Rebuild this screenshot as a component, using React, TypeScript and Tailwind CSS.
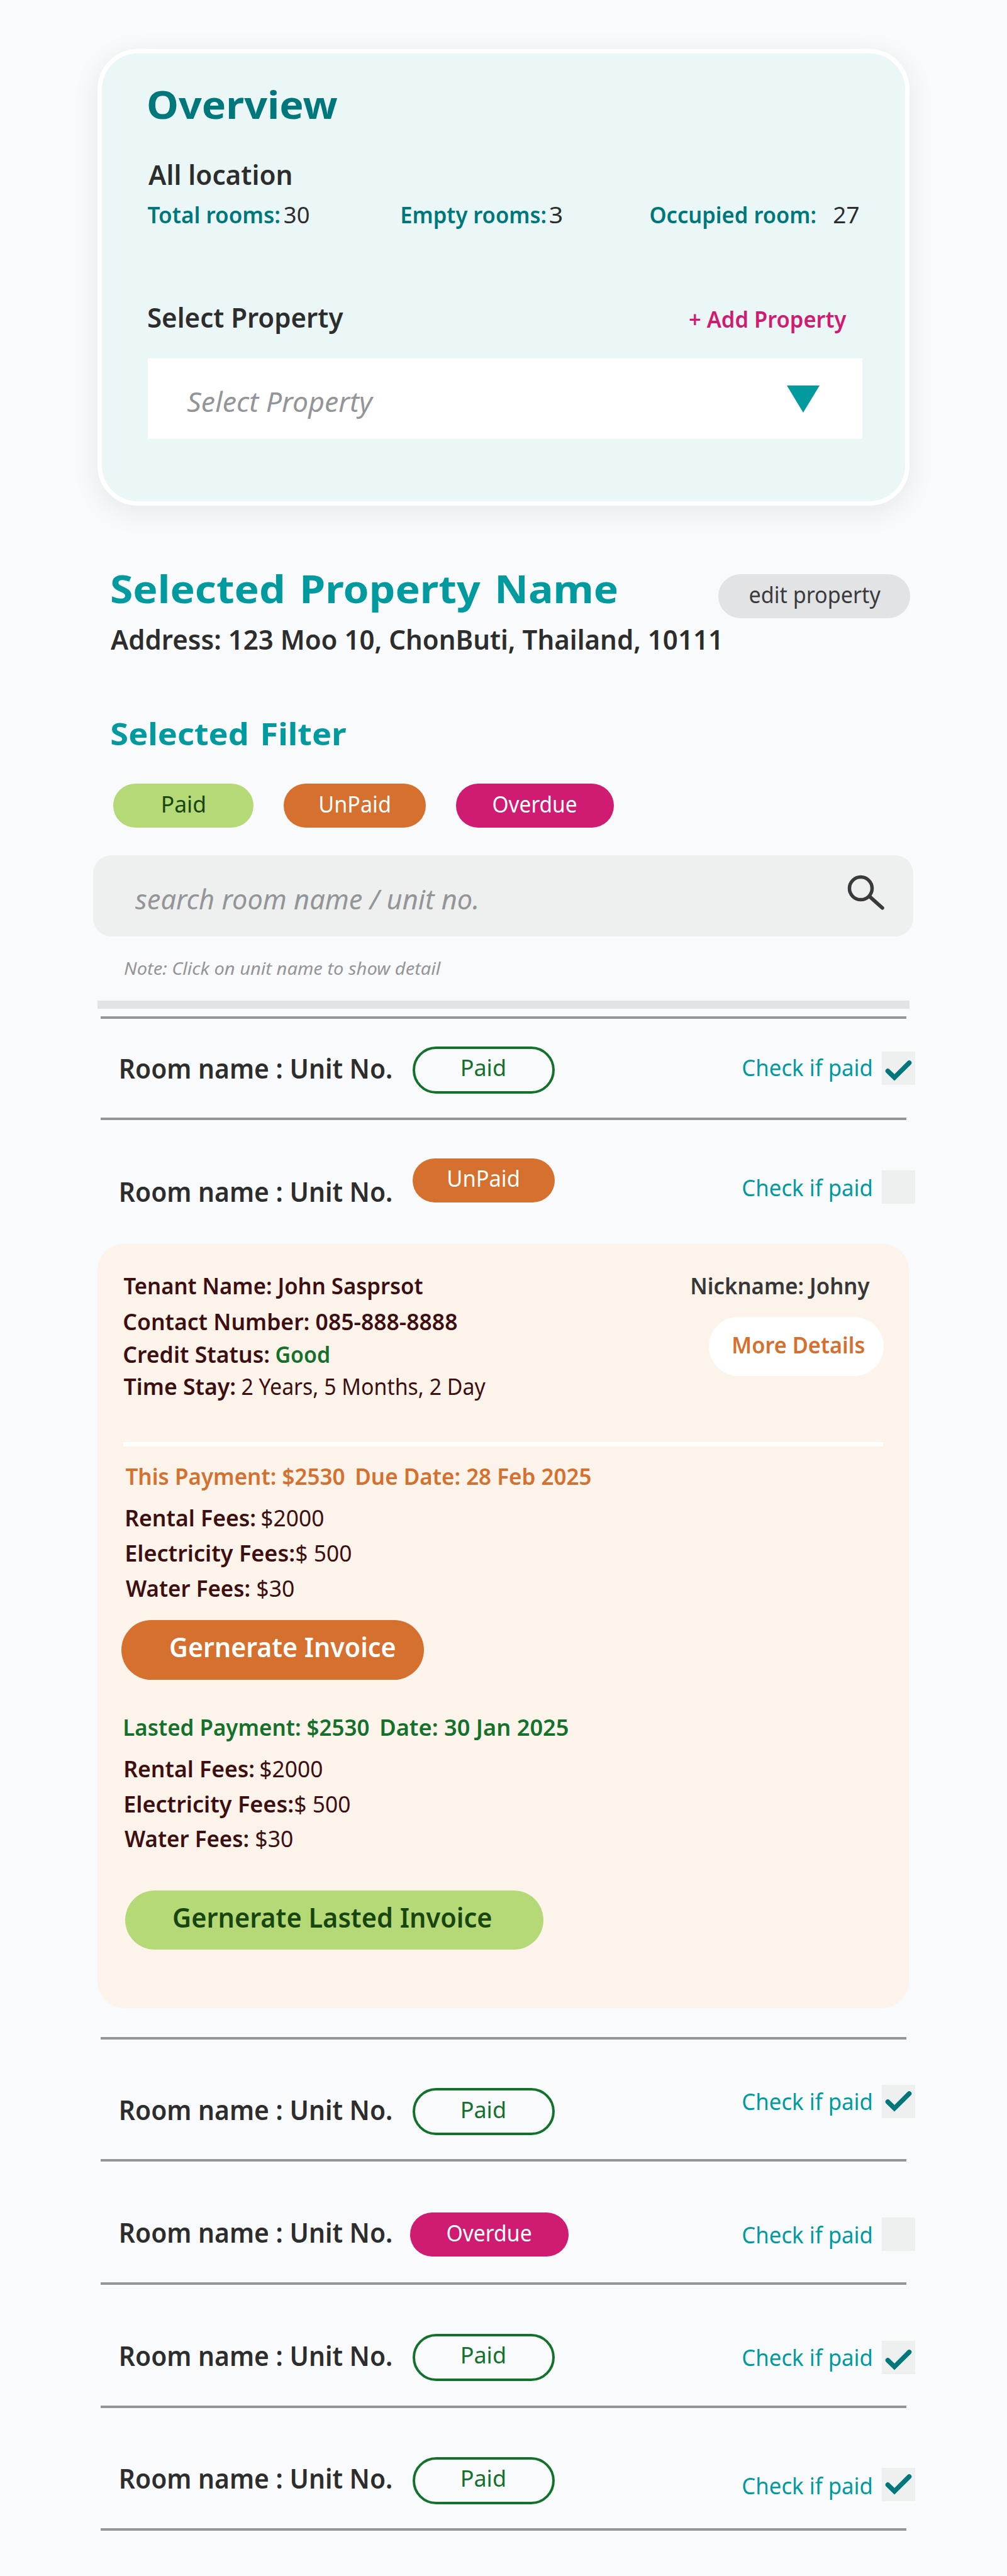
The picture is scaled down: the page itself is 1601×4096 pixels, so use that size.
import { useLayoutEffect, useRef } from "react";
import type { ReactNode } from "react";

/** One-line label whose ink spans exactly the width given by its own class. */
function Label({ children, className }: { children: string; className: string }) {
  const box = useRef<HTMLSpanElement>(null);
  const ink = useRef<HTMLSpanElement>(null);

  useLayoutEffect(() => {
    if (!box.current || !ink.current) return;
    const ctx = document.createElement("canvas").getContext("2d");
    if (!ctx) return;
    const cs = getComputedStyle(ink.current);
    // Measured at ten times the size, since ink bounds come back in whole pixels.
    ctx.font = `${cs.fontStyle} ${cs.fontWeight} ${parseFloat(cs.fontSize) * 10}px ${cs.fontFamily}`;
    ctx.wordSpacing = `${(parseFloat(cs.wordSpacing) || 0) * 10}px`;
    const m = ctx.measureText(children);
    const left = m.actualBoundingBoxLeft / 10;
    const right = m.actualBoundingBoxRight / 10;
    const scale = box.current.offsetWidth / (left + right);
    ink.current.style.transform = `translateX(${left * scale}px) scaleX(${scale})`;
  }, [children]);

  return (
    <span ref={box} className={`block shrink-0 whitespace-pre ${className}`}>
      <span ref={ink} className="inline-block origin-left align-top">
        {children}
      </span>
    </span>
  );
}

const XL = "text-[61px] leading-[80px] font-bold [word-spacing:5px]";
const H2 = "text-[49px] leading-[64px] font-bold [word-spacing:4px]";
const LG = "text-[43px] leading-[56px]";
const MD = "text-[36px] leading-[48px]";
const SM = "text-[28px] leading-[36px]";

function Stat({ label, value, labelW, valueW, className, gap }: {
  label: string; value: string; labelW: string; valueW: string; className: string; gap: string;
}) {
  return (
    <div className={`flex ${gap} ${className}`}>
      <Label className={`${MD} ${labelW} font-semibold text-[#00777b]`}>{label}</Label>
      <Label className={`${MD} ${valueW} text-[#2d2d2d]`}>{value}</Label>
    </div>
  );
}

function Rule({ className = "" }: { className?: string }) {
  return <div className={`ml-[160px] h-[4px] w-[1281px] bg-[#939598] ${className}`} />;
}

type Status = "paid" | "unpaid" | "overdue";

const badge: Record<Status, { text: string; pill: string; label: string }> = {
  paid: { text: "Paid", pill: "ml-[34px] h-[75px] w-[226px] border-4 border-[#13712c] pl-[75px] text-[#13712c]", label: "w-[67px]" },
  unpaid: { text: "UnPaid", pill: "ml-[34px] h-[70px] w-[226px] bg-[#d5702e] pl-[57px] text-white", label: "w-[111px]" },
  overdue: { text: "Overdue", pill: "ml-[30px] h-[70px] w-[252px] bg-[#cf1b72] pl-[59px] text-white", label: "w-[133px]" },
};

function Room({ status, checked, height, room, pill, check, box, mark = "" }: {
  status: Status; checked?: boolean; height: string; room: string; pill: string; check: string; box: string; mark?: string;
}) {
  const b = badge[status];
  return (
    <div className={`ml-[192px] flex w-[1263px] items-start ${height}`}>
      <Label className={`${LG} w-[430px] font-semibold text-[#2d2d2d] ${room}`}>Room name : Unit No.</Label>
      <div className={`shrink-0 rounded-full ${b.pill} ${pill}`}>
        <Label className={`${MD} ${b.label}`}>{b.text}</Label>
      </div>
      <Label className={`${MD} ml-auto w-[204px] text-[#009a9f] ${check}`}>Check if paid</Label>
      <div className={`ml-[17px] size-[53px] shrink-0 bg-[#eef0ef] ${box}`}>
        {checked && (
          <svg viewBox="0 0 53 53" className={`size-[53px] ${mark}`} fill="none">
            <path d="M9.5 31 20 41.3 43.5 18" stroke="#00777b" strokeWidth="7.5" strokeLinecap="round" strokeLinejoin="miter" />
          </svg>
        )}
      </div>
    </div>
  );
}

function Pair({ label, value, labelW, valueW, gap, className }: {
  label: string; value: string; labelW: string; valueW: string; gap: string; className: string;
}) {
  return (
    <div className={`flex ${gap} ${className}`}>
      <Label className={`${MD} ${labelW} font-semibold`}>{label}</Label>
      <Label className={`${MD} ${valueW}`}>{value}</Label>
    </div>
  );
}

function Fees({ waterGap }: { waterGap: string }) {
  return (
    <>
      <Pair className="mt-[18px]" gap="gap-[11px]" label="Rental Fees:" labelW="w-[204px]" value="$2000" valueW="w-[98px]" />
      <Pair className="mt-[8px]" gap="gap-[4px]" label="Electricity Fees:" labelW="w-[266px]" value="$ 500" valueW="w-[87px]" />
      <Pair className={`-ml-px ${waterGap}`} gap="gap-[13px]" label="Water Fees:" labelW="w-[196px]" value="$30" valueW="w-[58px]" />
    </>
  );
}

function FilterPill({ className, children }: { className: string; children: ReactNode }) {
  return <div className={`h-[70px] rounded-full pt-[9px] ${className}`}>{children}</div>;
}

export default function App() {
  return (
    <main className="h-[4096px] w-[1601px] overflow-hidden bg-[#f9fafc] pt-[78px] font-['Noto_Sans',sans-serif]">
      {/* Overview */}
      <section className="ml-[155px] h-[726px] w-[1291px] rounded-[64px] border-[7px] border-white bg-[#ebf7f7] pt-[41px] pl-[74px] shadow-[0_10px_44px_rgba(20,20,20,0.08)]">
        <Label className={`${XL} w-[301px] text-[#00777b]`}>Overview</Label>
        <Label className={`${LG} mt-[44px] w-[227px] font-semibold text-[#2d2d2d]`}>All location</Label>
        <div className="mt-[12px] -ml-px flex">
          <Stat className="" gap="gap-[8px]" label="Total rooms:" labelW="w-[209px]" value="30" valueW="w-[39px]" />
          <Stat className="ml-[148px]" gap="gap-[7px]" label="Empty rooms:" labelW="w-[228px]" value="3" valueW="w-[19px]" />
          <Stat className="ml-[141px]" gap="gap-[30px]" label="Occupied room:" labelW="w-[262px]" value="27" valueW="w-[39px]" />
        </div>
        <div className="mt-[111px] flex w-[1110px] items-start justify-between">
          <Label className={`${LG} w-[310px] font-semibold text-[#2d2d2d]`}>Select Property</Label>
          <Label className={`${MD} mt-[7px] w-[250px] font-semibold text-[#cf1b72]`}>+ Add Property</Label>
        </div>
        <div className="mt-[37px] -ml-px flex h-[128px] w-[1136px] items-start justify-between bg-white pr-[68px] pl-[63px]">
          <Label className={`${LG} mt-[41px] w-[296px] text-[#939598] italic`}>Select Property</Label>
          <svg viewBox="0 0 52 43" className="mt-[43px] h-[43px] w-[52px]">
            <path d="M0 0H52L26 43Z" fill="#009a9f" />
          </svg>
        </div>
      </section>

      {/* Selected property */}
      <section className="mt-[92px] ml-[177px]">
        <div className="flex h-[80px] w-[1270px] items-start justify-between">
          <Label className={`${XL} w-[804px] text-[#009a9f]`}>Selected Property Name</Label>
          <div className="mt-[17px] h-[70px] w-[305px] rounded-full bg-[#e2e3e5] pt-[9px] pl-[50px]">
            <Label className={`${MD} w-[208px] text-[#3a3a3c]`}>edit property</Label>
          </div>
        </div>
        <Label className={`${LG} mt-[13px] -ml-px w-[967px] font-semibold text-[#2d2d2d]`}>
          Address: 123 Moo 10, ChonButi, Thailand, 10111
        </Label>
        <Label className={`${H2} mt-[89px] w-[373px] text-[#009a9f]`}>Selected Filter</Label>
        <div className="mt-[48px] ml-[3px] flex gap-[48px]">
          <FilterPill className="w-[223px] bg-[#b6d978] pl-[79px]">
            <Label className={`${MD} w-[66px] text-[#17470f]`}>Paid</Label>
          </FilterPill>
          <FilterPill className="w-[226px] bg-[#d5702e] pl-[58px]">
            <Label className={`${MD} w-[110px] text-white`}>UnPaid</Label>
          </FilterPill>
          <FilterPill className="w-[251px] bg-[#cf1b72] pl-[59px]">
            <Label className={`${MD} w-[132px] text-white`}>Overdue</Label>
          </FilterPill>
        </div>
      </section>

      {/* Search */}
      <div className="mt-[44px] ml-[148px] flex h-[129px] w-[1304px] items-start justify-between rounded-[29px] bg-[#eef0ef] pr-[46px] pl-[67px]">
        <Label className={`${LG} mt-[42px] w-[543px] text-[#939598] italic`}>search room name / unit no.</Label>
        <svg viewBox="0 0 60 57" className="mt-[31px] h-[57px] w-[60px]" fill="none" stroke="#3a3a3c" strokeLinecap="round">
          <circle cx="22.5" cy="21.6" r="18" strokeWidth="5.5" />
          <path d="M36.5 34.5 56.8 52.7" strokeWidth="5.8" />
        </svg>
      </div>
      <Label className={`${SM} mt-[32px] ml-[198px] w-[503px] text-[#939598] italic`}>Note: Click on unit name to show detail</Label>
      <div className="mt-[34px] ml-[155px] h-[13px] w-[1291px] bg-[#e2e3e5]" />
      <Rule className="mt-[12px]" />

      <Room status="paid" checked height="h-[157px]" room="mt-[51px]" pill="mt-[44px] pt-[6px]" check="mt-[54px]" box="mt-[52px]" />
      <Rule />
      <Room status="unpaid" height="h-[197px]" room="mt-[86px]" pill="mt-[61px] pt-[8px]" check="mt-[84px]" box="mt-[80px]" />

      {/* Tenant detail */}
      <section className="ml-[155px] h-[1215px] w-[1290px] rounded-[42px] bg-[#fcf3ea] pt-[43px] pl-[42px] text-[#3d0f10]">
        <div className="flex w-[1208px] items-start justify-between">
          <div>
            <Label className={`${MD} w-[475px] font-semibold`}>Tenant Name: John Sasprsot</Label>
            <Label className={`${MD} mt-[9px] w-[529px] font-semibold`}>Contact Number: 085-888-8888</Label>
            <div className="mt-[4px] flex gap-[12px] font-semibold">
              <Label className={`${MD} w-[230px]`}>Credit Status:</Label>
              <Label className={`${MD} w-[84px] text-[#13712c]`}>Good</Label>
            </div>
            <Pair className="mt-[3px]" gap="gap-[12px]" label="Time Stay:" labelW="w-[176px]" value="2 Years, 5 Months, 2 Day" valueW="w-[387px]" />
          </div>
          <div className="flex flex-col items-end">
            <Label className={`${MD} mr-[22px] w-[283px] font-semibold text-[#373737]`}>Nickname: Johny</Label>
            <div className="mt-[25px] h-[94px] w-[278px] rounded-full bg-white pt-[21px] pl-[39px]">
              <Label className={`${MD} w-[208px] font-semibold text-[#d5702e]`}>More Details</Label>
            </div>
          </div>
        </div>
        <div className="mt-[64px] -ml-px h-[7px] w-[1208px] bg-white" />

        <div className="ml-[4px]">
          <div className="mt-[24px] -ml-px flex gap-[20px] font-semibold text-[#d5702e]">
            <Label className={`${MD} w-[347px]`}>This Payment: $2530</Label>
            <Label className={`${MD} w-[372px]`}>Due Date: 28 Feb 2025</Label>
          </div>
          <Fees waterGap="mt-[8px]" />
          <div className="mt-[26px] -ml-[8px] h-[95px] w-[481px] rounded-full bg-[#d5702e] pt-[15px] pl-[78px]">
            <Label className={`${LG} w-[357px] font-semibold text-white`}>Gernerate Invoice</Label>
          </div>
        </div>

        <div className="ml-[2px]">
          <div className="mt-[52px] -ml-px flex gap-[20px] font-semibold text-[#13712c]">
            <Label className={`${MD} w-[388px]`}>Lasted Payment: $2530</Label>
            <Label className={`${MD} w-[297px]`}>Date: 30 Jan 2025</Label>
          </div>
          <Fees waterGap="mt-[7px]" />
          <div className="mt-[58px] h-[94px] w-[665px] rounded-full bg-[#b6d978] pt-[15px] pl-[77px]">
            <Label className={`${LG} w-[505px] font-semibold text-[#17470f]`}>Gernerate Lasted Invoice</Label>
          </div>
        </div>
      </section>

      <Rule className="mt-[46px]" />
      <Room status="paid" checked height="h-[190px]" room="mt-[84px]" pill="mt-[77px] pt-[7px]" check="mt-[75px]" box="mt-[72px]" mark="-mt-[4px]" />
      <Rule />
      <Room status="overdue" height="h-[192px]" room="mt-[85px]" pill="mt-[81px] pt-[9px]" check="mt-[93px]" box="mt-[89px]" />
      <Rule />
      <Room status="paid" checked height="h-[192px]" room="mt-[85px]" pill="mt-[78px] pt-[6px]" check="mt-[92px]" box="mt-[89px]" />
      <Rule />
      <Room status="paid" checked height="h-[191px]" room="mt-[84px]" pill="mt-[78px] pt-[6px]" check="mt-[100px]" box="mt-[95px]" mark="-mt-[4px]" />
      <Rule />
    </main>
  );
}
